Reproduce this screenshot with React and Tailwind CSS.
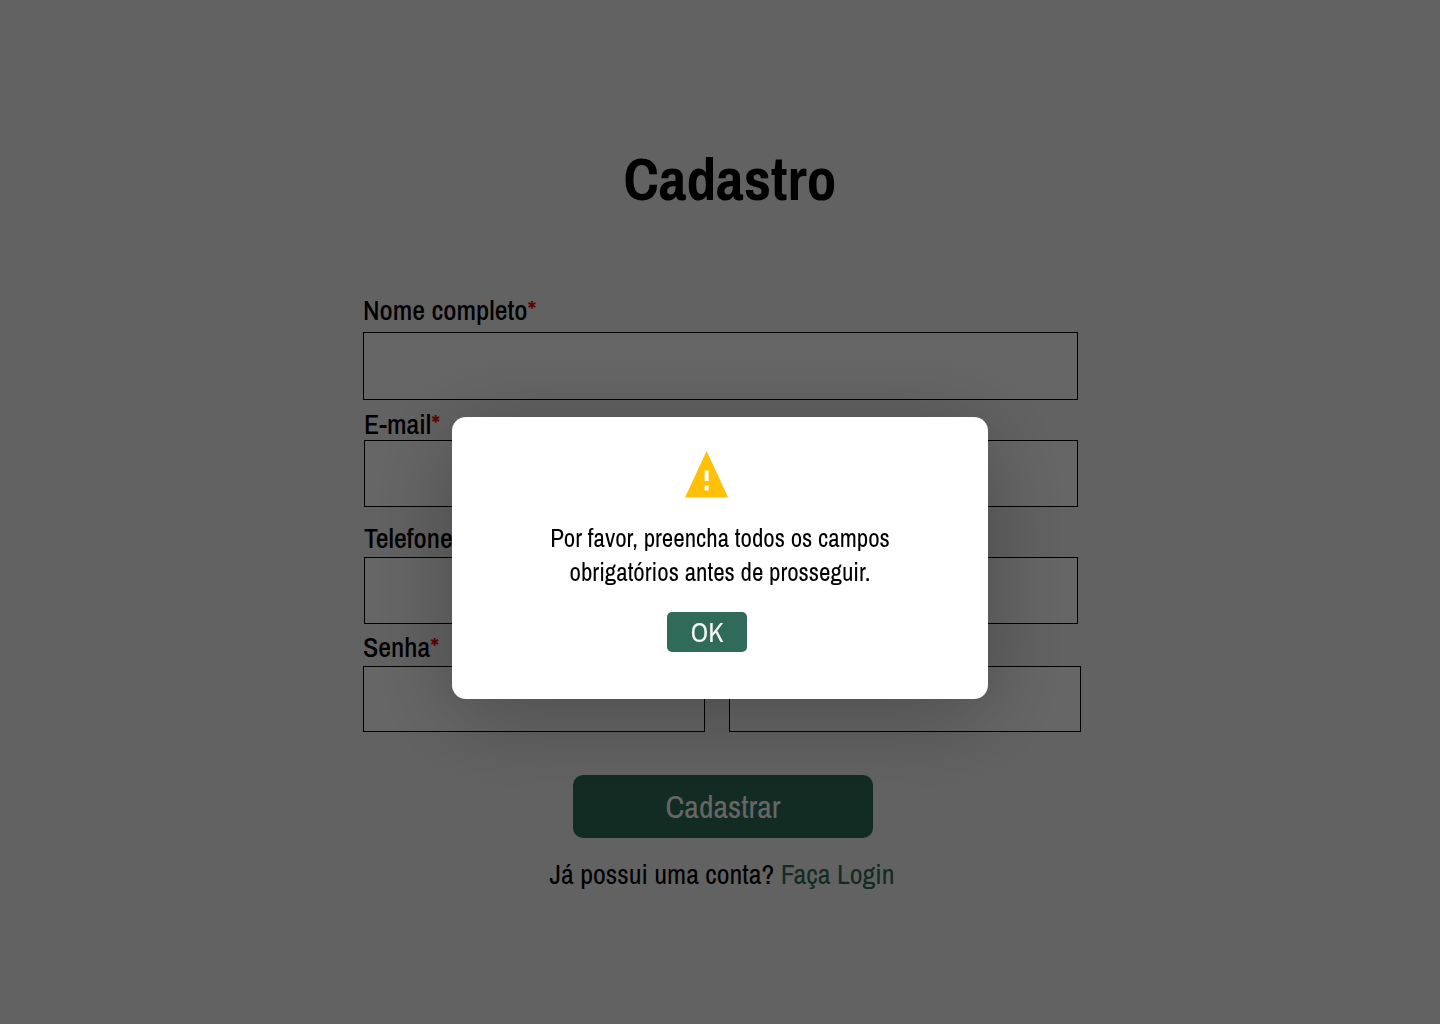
function Required() {
  return <span className="text-[#ff0000]">*</span>;
}

function Label({ htmlFor, children }) {
  return (
    <label htmlFor={htmlFor} className="block text-[28px] leading-8 font-medium">
      {children}
      <Required />
    </label>
  );
}

const box = "block w-full rounded-none border border-black bg-white px-4 text-2xl outline-none";

export default function App() {
  return (
    <div className="min-h-screen bg-[#f5f5f5] font-['Archivo_Narrow','Liberation_Sans_Narrow','Arial_Narrow','Liberation_Sans',sans-serif] text-black antialiased">
      <main className="mx-auto w-full max-w-[722px] pt-36 pb-32 pl-1">
        <h1 className="pl-4 text-center text-[60px] leading-[70px] font-bold">Cadastro</h1>
        <form className="mt-20 flex flex-col" onSubmit={(e) => e.preventDefault()}>
          <div className="flex flex-col gap-1.5 pr-[3px]">
            <Label htmlFor="nome">Nome completo</Label>
            <input id="nome" type="text" className={`${box} h-[68px]`} />
          </div>
          <div className="mt-2 flex flex-col pr-[3px] pl-px">
            <Label htmlFor="email">E-mail</Label>
            <input id="email" type="email" className={`${box} h-[67px]`} />
          </div>
          <div className="mt-[15px] flex flex-col gap-[3px] pr-[3px] pl-px">
            <Label htmlFor="telefone">Telefone</Label>
            <input id="telefone" type="tel" className={`${box} h-[67px]`} />
          </div>
          <div className="mt-[7px] flex flex-col gap-[3px]">
            <Label htmlFor="senha">Senha</Label>
            <div className="grid grid-cols-[342fr_352fr] gap-6">
              <input id="senha" type="password" className={`${box} h-[66px]`} />
              <input type="password" aria-label="Confirmar senha" className={`${box} h-[66px]`} />
            </div>
          </div>
          <div className="mt-[43px] flex justify-center pl-0.5">
            <button
              type="submit"
              className="h-[63px] w-[300px] rounded-[10px] bg-[#2f6b58] text-[32px] text-white"
            >
              Cadastrar
            </button>
          </div>
          <p className="mt-5 text-center text-[28px] leading-8">
            Já possui uma conta?{" "}
            <a href="#login" className="text-[#2f6b58]">
              Faça Login
            </a>
          </p>
        </form>
      </main>

      <div className="fixed inset-0 flex items-start justify-center bg-black/60 pt-[417px]">
        <div
          role="alertdialog"
          aria-modal="true"
          aria-describedby="aviso"
          className="flex w-full max-w-[536px] flex-col items-center rounded-[14px] bg-white px-20 pt-[34px] pb-[47px] shadow-[0_15px_90px_rgba(0,0,0,0.27)]"
        >
          <div className="pr-[26px]">
            <svg width="44" height="47" viewBox="0 0 44 47" fill="#ffc107" aria-hidden="true">
              <path
                fillRule="evenodd"
                d="M0 46.5 21.6 0 43.2 46.5ZM19.6 19.5V30h4V19.5ZM19.6 34.5v5h4v-5Z"
              />
            </svg>
          </div>
          <p id="aviso" className="mt-[23px] text-center text-[25px] leading-[34px]">
            Por favor, preencha todos os campos
            <br />
            obrigatórios antes de prosseguir.
          </p>
          <div className="mt-[23px] pr-[26px]">
            <button type="button" className="block h-10 w-20 rounded-[5px] bg-[#2f6b58] text-[28px] leading-10 text-[#f5f5f5]">
              OK
            </button>
          </div>
        </div>
      </div>
    </div>
  );
}
